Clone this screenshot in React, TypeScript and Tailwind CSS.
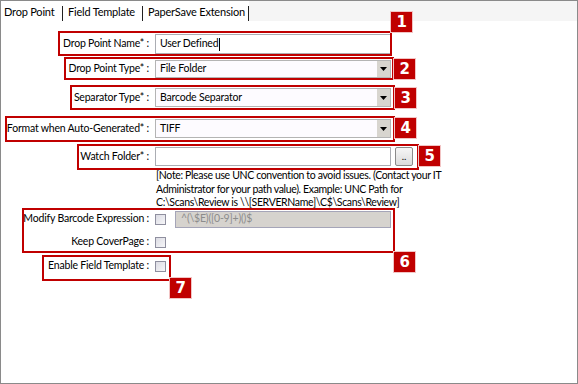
import type { ReactNode } from "react";

const FONT = { fontFamily: 'Lato, "Open Sans", sans-serif' };

function Badge({ n, className }: { n: string; className: string }) {
  return (
    <div
      className={`absolute flex h-[20px] w-[21px] items-center justify-center bg-[#c00000] text-[15px] font-bold leading-none text-white outline outline-1 outline-[#f2c4c4] ${className}`}
      style={{ fontFamily: '"DejaVu Sans", sans-serif' }}
    >
      {n}
    </div>
  );
}

function Row({ label, children, className }: { label: string; children: ReactNode; className: string }) {
  return (
    <div className={`flex items-center ${className}`}>
      <div className="w-[148px] shrink-0 whitespace-nowrap text-right">{label}</div>
      <div className="ml-[6px] flex items-center">{children}</div>
    </div>
  );
}

function Select({ value }: { value: string }) {
  return (
    <div className="flex h-full w-[236px] items-center border border-[#b4b4b4] bg-[#fdfbff] pl-[4px]">
      <span className="flex-1">{value}</span>
      <span className="flex h-full w-[13px] items-center justify-center bg-[#d8d5cf]">
        <svg width="7" height="4" viewBox="0 0 7 4">
          <path d="M0 0h7L3.5 4z" fill="#000" />
        </svg>
      </span>
    </div>
  );
}

function Check() {
  return <span className="block h-[11px] w-[11px] border border-[#8f8f9f] bg-gradient-to-br from-[#dcdce4] to-[#f6f6f8]" />;
}

export default function App() {
  return (
    <div
      className="relative flex h-[384px] w-[578px] flex-col overflow-hidden border border-[#8a8a8a] bg-white text-[10.5px] tracking-[-0.2px] text-black"
      style={FONT}
    >
      <div className="flex h-[20px] shrink-0 bg-[#f5f5f5] text-[11px]">
        <div className="flex w-[62px] shrink-0 items-end bg-white">
          <span className="flex-1 whitespace-nowrap pb-[1px] pl-[3px]">Drop Point</span>
          <span className="h-[15px] w-px bg-[#202020]" />
        </div>
        <div className="flex w-[80px] shrink-0 items-end bg-white">
          <span className="flex-1 whitespace-nowrap pb-[1px] pl-[5px]">Field Template</span>
          <span className="h-[15px] w-px bg-[#202020]" />
        </div>
        <div className="flex w-[106px] shrink-0 items-end bg-white">
          <span className="flex-1 whitespace-nowrap pb-[1px] pl-[5px]">PaperSave Extension</span>
          <span className="h-[15px] w-px bg-[#202020]" />
        </div>
      </div>

      <div className="flex flex-col">
        <Row label="Drop Point Name* :" className="mt-[13px] h-[20px]">
          <div className="flex h-[20px] w-[236px] items-center border border-[#abadb3] bg-white pl-[4px]">
            User Defined
            <span className="ml-px h-[13px] w-px bg-black" />
          </div>
        </Row>
        <Row label="Drop Point Type* :" className="mt-[6px] h-[18px]">
          <div className="h-[18px]">
            <Select value="File Folder" />
          </div>
        </Row>
        <Row label="Separator Type* :" className="mt-[10px] h-[19px]">
          <div className="h-[19px]">
            <Select value="Barcode Separator" />
          </div>
        </Row>
        <Row label="Format when Auto-Generated* :" className="mt-[12px] h-[19px]">
          <div className="h-[19px]">
            <Select value="TIFF" />
          </div>
        </Row>
        <Row label="Watch Folder* :" className="mt-[9px] h-[19px]">
          <div className="h-[19px] w-[236px] border border-[#abadb3] bg-white" />
          <button className="ml-[4px] flex h-[19px] w-[18px] items-end justify-center rounded-[2px] border border-[#8a8a8a] bg-gradient-to-b from-[#f6f6f6] to-[#dcdcdc] pb-[4px] text-[10px] leading-none tracking-normal">
            ..
          </button>
        </Row>
        <div className="ml-[155px] mt-[3px] whitespace-nowrap leading-[13.5px] tracking-[-0.35px]">
          [Note: Please use UNC convention to avoid issues. (Contact your IT
          <br />
          Administrator for your path value). Example: UNC Path for
          <br />
          {"C:\\Scans\\Review is \\\\[SERVERName]\\C$\\Scans\\Review]"}
        </div>
        <Row label="Modify Barcode Expression :" className="mt-[1px] h-[17px]">
          <Check />
          <div className="ml-[9px] flex h-[17px] w-[216px] items-center border border-[#a5a5b8] bg-[#d6d3ce] pl-[5px] text-[#8c8c8c]">
            {"^(\\$E)([0-9]+)()$"}
          </div>
        </Row>
        <Row label="Keep CoverPage :" className="mt-[6px] h-[17px]">
          <Check />
        </Row>
        <Row label="Enable Field Template :" className="mt-[7px] h-[17px]">
          <Check />
        </Row>
      </div>

      <div className="absolute left-[57px] top-[30px] h-[25px] w-[334px] border-2 border-[#c00000]" />
      <Badge n="1" className="left-[390px] top-[11px]" />
      <div className="absolute left-[63px] top-[56px] h-[23px] w-[330px] border-2 border-[#c00000]" />
      <Badge n="2" className="left-[393px] top-[58px]" />
      <div className="absolute left-[69px] top-[84px] h-[25px] w-[325px] border-2 border-[#c00000]" />
      <Badge n="3" className="left-[394px] top-[87px]" />
      <div className="absolute left-[4px] top-[115px] h-[26px] w-[390px] border-2 border-[#c00000]" />
      <Badge n="4" className="left-[394px] top-[117px]" />
      <div className="absolute left-[76px] top-[143px] h-[26px] w-[342px] border-2 border-[#c00000]" />
      <Badge n="5" className="left-[418px] top-[145px]" />
      <div className="absolute left-[21px] top-[207px] h-[45px] w-[373px] border-2 border-[#c00000]" />
      <Badge n="6" className="left-[393px] top-[251px]" />
      <div className="absolute left-[41px] top-[254px] h-[26px] w-[129px] border-2 border-[#c00000]" />
      <Badge n="7" className="left-[169px] top-[277px]" />
    </div>
  );
}
